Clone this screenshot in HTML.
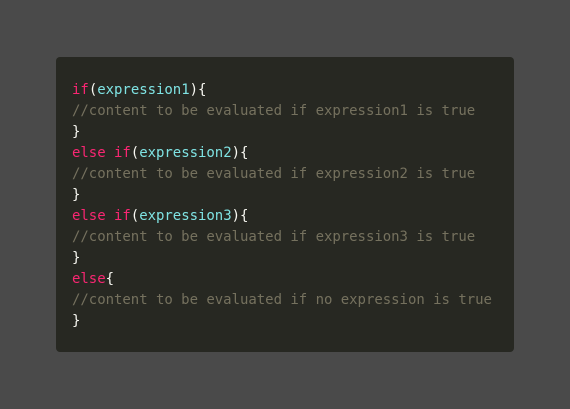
<!DOCTYPE html>
<html><head><style>
html,body{margin:0;padding:0;background:#4a4a4a;width:570px;height:409px;overflow:hidden}
.box{position:absolute;left:56px;top:57px;width:458px;height:295px;background:#272822;border-radius:4px}
pre{margin:0;position:absolute;left:16px;top:23px;font-family:"DejaVu Sans Mono","Liberation Mono",monospace;font-size:14px;letter-spacing:-0.03px;line-height:21px;color:#f8f8f2}
.k{color:#f92672}.f{color:#7fe3e3}.c{color:#75715e}
</style></head><body>
<div class="box"><pre><span class="k">if</span>(<span class="f">expression1</span>){
<span class="c">//content to be evaluated if expression1 is true</span>
}
<span class="k">else if</span>(<span class="f">expression2</span>){
<span class="c">//content to be evaluated if expression2 is true</span>
}
<span class="k">else if</span>(<span class="f">expression3</span>){
<span class="c">//content to be evaluated if expression3 is true</span>
}
<span class="k">else</span>{
<span class="c">//content to be evaluated if no expression is true</span>
}</pre></div>
</body></html>
